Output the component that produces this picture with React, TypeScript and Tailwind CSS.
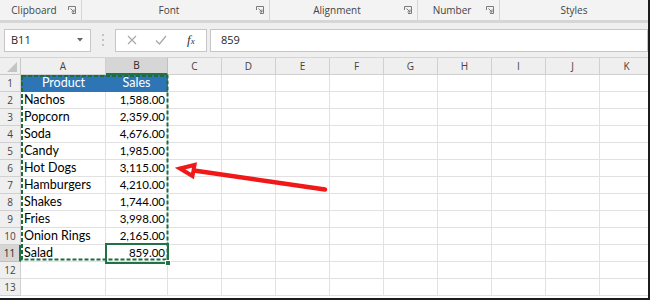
import clsx from 'clsx'

const rows: [string, string][] = [
  ['Nachos', '1,588.00'],
  ['Popcorn', '2,359.00'],
  ['Soda', '4,676.00'],
  ['Candy', '1,985.00'],
  ['Hot Dogs', '3,115.00'],
  ['Hamburgers', '4,210.00'],
  ['Shakes', '1,744.00'],
  ['Fries', '3,998.00'],
  ['Onion Rings', '2,165.00'],
  ['Salad', '859.00'],
]

const otherCols = ['C', 'D', 'E', 'F', 'G', 'H', 'I', 'J', 'K']

const groups = [
  { label: 'Clipboard', width: 'w-[82px]', launcher: true },
  { label: 'Font', width: 'w-[188px]', launcher: true },
  { label: 'Alignment', width: 'w-[148px]', launcher: true },
  { label: 'Number', width: 'w-[82px]', launcher: true },
  { label: 'Styles', width: 'w-[154px]', launcher: false },
]

function Launcher() {
  return (
    <svg width="8" height="8" viewBox="0 0 8 8" className="shrink-0">
      <path d="M0.5 4V0.5H7.5V7.5H4" fill="none" stroke="#7a7a7a" strokeWidth="1" />
      <path d="M2.5 2.5L6 6M6 3.5V6H3.5" fill="none" stroke="#7a7a7a" strokeWidth="1" />
    </svg>
  )
}

function Ribbon() {
  return (
    <div className="flex h-[20px] bg-[#f3f3f3] font-['Open_Sans',sans-serif] text-[10px] text-[#444]">
      {groups.map((g) => (
        <div key={g.label} className={clsx('flex shrink-0 items-center border-r border-[#d6d6d6] pr-[5px]', g.width)}>
          <span className="flex-1 text-center">{g.label}</span>
          {g.launcher && <Launcher />}
        </div>
      ))}
    </div>
  )
}

function FormulaBar() {
  return (
    <div className="flex h-[34px] items-center bg-[#efefef] pl-[4px] font-['Open_Sans',sans-serif] text-[11px] text-[#262626]">
      <div className="flex h-[23px] w-[87px] items-center justify-between border border-[#c6c6c6] bg-white pl-[6px] pr-[7px]">
        <span>B11</span>
        <svg width="6" height="4" viewBox="0 0 6 4">
          <path d="M0 0H6L3 3.5Z" fill="#666" />
        </svg>
      </div>
      <div className="flex w-[24px] flex-col items-center gap-[3px]">
        <span className="h-[2px] w-[2px] rounded-full bg-[#b4b4b4]" />
        <span className="h-[2px] w-[2px] rounded-full bg-[#b4b4b4]" />
        <span className="h-[2px] w-[2px] rounded-full bg-[#b4b4b4]" />
      </div>
      <div className="flex h-[23px] w-[92px] items-center border border-[#c6c6c6] bg-white">
        <svg width="10" height="10" viewBox="0 0 10 10" className="ml-[11px]">
          <path d="M1 1L9 9M9 1L1 9" stroke="#a9a9a9" strokeWidth="1.2" />
        </svg>
        <svg width="12" height="10" viewBox="0 0 12 10" className="ml-[18px]">
          <path d="M1 5.5L4.5 9L11 1" fill="none" stroke="#a9a9a9" strokeWidth="1.3" />
        </svg>
        <span className="ml-[20px] font-['Liberation_Serif',serif] text-[13px] italic text-[#333]">
          f<span className="text-[9px]">x</span>
        </span>
      </div>
      <div className="ml-[3px] flex h-[23px] flex-1 items-center border border-[#c6c6c6] bg-white pl-[10px]">
        859
      </div>
    </div>
  )
}

function ColumnHeader() {
  return (
    <div className="flex h-[18px] border-t border-[#d4d4d4] bg-[#efefef] font-['Open_Sans',sans-serif] text-[10px] text-[#444]">
      <div className="relative w-[21px] shrink-0 border-r border-b border-[#c8c8c8]">
        <svg width="10" height="10" viewBox="0 0 10 10" className="absolute right-[3px] bottom-[2px]">
          <path d="M10 0V10H0Z" fill="#c4c4c4" />
        </svg>
      </div>
      <div className="flex w-[85px] shrink-0 items-center justify-center border-r border-b border-[#d0d0d0]">A</div>
      <div className="flex w-[62px] shrink-0 items-center justify-center border-r border-b-2 border-r-[#c0c0c0] border-b-[#217346] bg-[#d6d6d6] text-[#262626]">
        B
      </div>
      {otherCols.map((c) => (
        <div key={c} className="flex w-[54px] shrink-0 items-center justify-center border-r border-b border-[#d0d0d0]">
          {c}
        </div>
      ))}
    </div>
  )
}

function Row({ n, product, sales }: { n: number; product?: string; sales?: string }) {
  const header = n === 1
  const active = n === 11
  return (
    <div className="flex h-[17px]">
      <div
        className={clsx(
          "flex w-[21px] shrink-0 items-center justify-center border-b font-['Open_Sans',sans-serif] text-[10px]",
          active
            ? 'border-r-2 border-r-[#217346] border-b-[#c0c0c0] bg-[#d6d6d6] text-[#262626]'
            : 'border-r border-[#d0d0d0] bg-[#efefef] text-[#444]',
        )}
      >
        {n}
      </div>
      {header ? (
        <>
          <div className="flex w-[85px] shrink-0 items-center justify-center bg-[#2e75b6] text-white">Product</div>
          <div className="flex w-[62px] shrink-0 items-center justify-center border-r border-[#2e75b6] bg-[#2e75b6] text-white">Sales</div>
        </>
      ) : (
        <>
          <div className="flex w-[85px] shrink-0 items-center border-r border-b border-[#e1e1e1] pl-[3px]">{product}</div>
          <div className="flex w-[62px] shrink-0 items-center justify-end border-r border-b border-[#e1e1e1] pr-[2px] text-[11.5px]">
            {sales}
          </div>
        </>
      )}
      {otherCols.map((c) => (
        <div key={c} className="w-[54px] shrink-0 border-r border-b border-[#e1e1e1]" />
      ))}
    </div>
  )
}

export default function App() {
  return (
    <div className="relative h-[300px] w-[650px] overflow-hidden border-r-2 border-b-2 border-[#1c1c1c] bg-white">
      <Ribbon />
      <div className="h-[3px] bg-[#d6d6d6]" />
      <FormulaBar />
      <ColumnHeader />
      <div className="font-['Lato',sans-serif] text-[12.5px] text-black">
        {Array.from({ length: 13 }, (_, i) => (
          <Row key={i} n={i + 1} product={rows[i - 1]?.[0]} sales={rows[i - 1]?.[1]} />
        ))}
      </div>

      <svg className="pointer-events-none absolute top-0 left-0" width="650" height="300" viewBox="0 0 650 300">
        <rect x="22" y="76" width="145.5" height="183.5" fill="none" stroke="#1f6b40" strokeWidth="2" strokeDasharray="4 2" />
        <rect x="106" y="244" width="62" height="19" fill="none" stroke="#217346" strokeWidth="2" />
        <rect x="165.5" y="260.5" width="5" height="5" fill="#217346" stroke="#fff" strokeWidth="1" />
        <line x1="194" y1="170.5" x2="325" y2="189.5" stroke="#f01818" strokeWidth="4.5" strokeLinecap="round" />
        <polygon points="180,168.5 194.5,165 192.5,176" fill="#fff" stroke="#f01818" strokeWidth="4" strokeLinejoin="miter" />
      </svg>
    </div>
  )
}
